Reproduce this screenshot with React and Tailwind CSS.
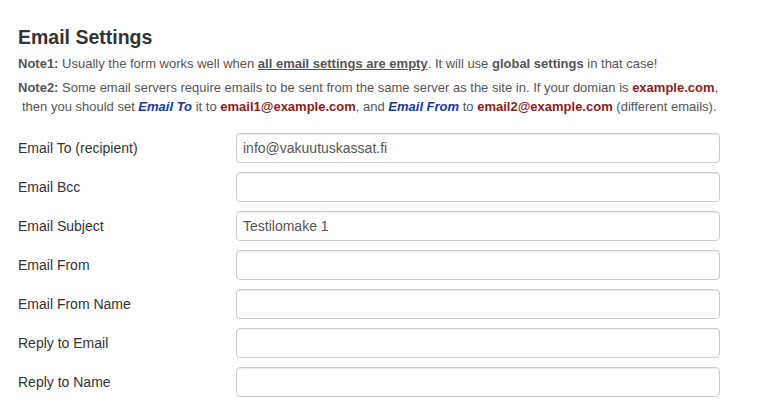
const fields = [
  { label: 'Email To (recipient)', value: 'info@vakuutuskassat.fi' },
  { label: 'Email Bcc', value: '' },
  { label: 'Email Subject', value: 'Testilomake 1' },
  { label: 'Email From', value: '' },
  { label: 'Email From Name', value: '' },
  { label: 'Reply to Email', value: '' },
  { label: 'Reply to Name', value: '' },
];

const Red = ({ children }) => <b className="text-[#8e1c1c]">{children}</b>;
const Blue = ({ children }) => <b className="italic text-[#1438a8]">{children}</b>;

export default function App() {
  return (
    <div className="min-h-screen bg-white font-['Liberation_Sans',Arial,sans-serif] px-[18px] pt-[26px]">
      <h2 className="text-[19.5px] leading-[23px] font-bold text-[#333]">Email Settings</h2>
      <p className="mt-[5px] text-[13px] leading-[19px] text-[#555]">
        <b>Note1:</b> Usually the form works well when <b className="underline">all email settings are empty</b>. It will use <b>global settings</b> in that case!
      </p>
      <p className="mt-[5px] text-[13px] leading-[19px] text-[#555]">
        <b>Note2:</b> Some email servers require emails to be sent from the same server as the site in. If your domian is <Red>example.com</Red>,
        <br />
        <span className="pl-[4px]">then you should set <Blue>Email To</Blue> it to <Red>email1@example.com</Red>, and <Blue>Email From</Blue> to <Red>email2@example.com</Red> (different emails).</span>
      </p>
      <div className="mt-[17px] flex flex-col gap-[9px]">
        {fields.map((f) => (
          <div key={f.label} className="flex items-center">
            <label className="w-[218px] text-[14px] text-[#333]">{f.label}</label>
            <input
              readOnly
              value={f.value}
              className="h-[30px] w-[484px] rounded-[4px] border border-[#ccc] bg-white px-[6px] text-[14px] text-[#555] shadow-[inset_0_1px_1px_rgba(0,0,0,0.075)] outline-none"
            />
          </div>
        ))}
      </div>
    </div>
  );
}
